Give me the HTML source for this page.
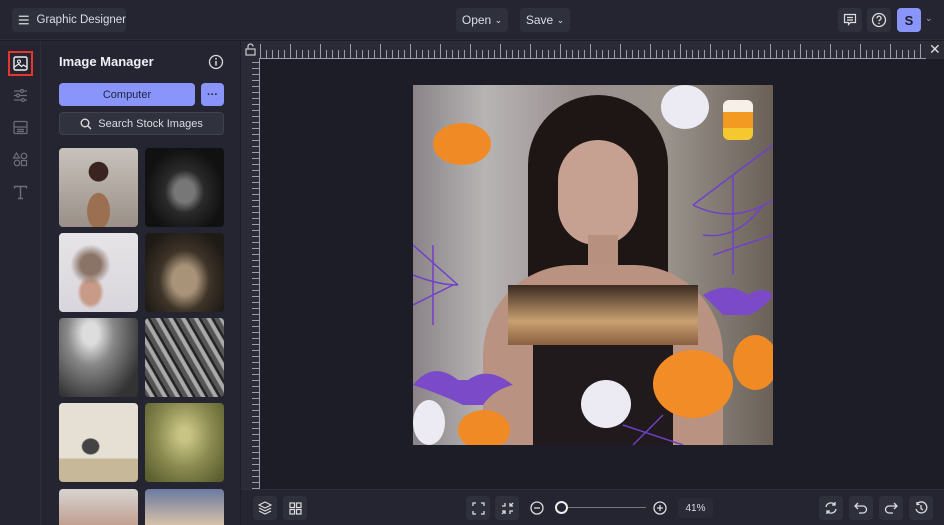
<!DOCTYPE html>
<html><head><meta charset="utf-8"><style>
*{box-sizing:border-box;margin:0;padding:0}
html,body{width:944px;height:525px;overflow:hidden}
body{background:#1c1d26;font-family:"Liberation Sans",sans-serif;color:#e6e7ee}
#root{position:relative;width:944px;height:525px;overflow:hidden}
.abs{position:absolute}
.top{left:0;top:0;width:944px;height:40px;background:#242530;border-bottom:1px solid #2c2d39}
.btn{position:absolute;background:#2e303c;border-radius:4px;font-size:12px;color:#dcdde5;display:flex;align-items:center;justify-content:center;white-space:nowrap}
.rail{left:0;top:41px;width:41px;height:484px;background:#242530;border-right:1px solid #2e2f3b}
.panel{left:41px;top:41px;width:199px;height:484px;background:#242530}
.th{position:absolute;width:79px;height:79px;border-radius:4px}
.ruler{background:#2a2b37}
</style></head><body><div id="root">
<div class="abs top"></div>
<div class="btn" style="left:12px;top:8px;width:114px;height:24px;justify-content:flex-start;padding-left:6px;font-size:11.5px">
<svg width="14" height="12" viewBox="0 0 14 12"><path d="M1 1.5h12M1 6h12M1 10.5h12" stroke="#ddd" stroke-width="1.5"/></svg><span style="margin-left:7px">Graphic Designer</span></div>
<div class="btn" style="left:456px;top:8px;width:52px;height:24px">Open&nbsp;<span style="font-size:9px">⌄</span></div>
<div class="btn" style="left:520px;top:8px;width:50px;height:24px">Save&nbsp;<span style="font-size:9px">⌄</span></div>
<div class="btn" style="left:838px;top:8px;width:24px;height:24px"><svg width="14" height="14" viewBox="0 0 14 14"><path d="M1.5 1.5h11v8h-5l-2 2v-2h-4z M4 4.5h6M4 7h6" stroke="#ddd" fill="none" stroke-width="1.2"/></svg></div>
<div class="btn" style="left:867px;top:8px;width:24px;height:24px"><svg width="16" height="16" viewBox="0 0 16 16"><circle cx="8" cy="8" r="6.5" stroke="#ddd" fill="none" stroke-width="1.3"/><path d="M6 6.3a2 2 0 1 1 2.5 1.8c-.5.2-.5.6-.5 1.2" stroke="#ddd" fill="none" stroke-width="1.3"/><circle cx="8" cy="11.3" r=".8" fill="#ddd"/></svg></div>
<div class="btn" style="left:897px;top:8px;width:24px;height:24px;background:#8a95fb;color:#1c1d2a;font-weight:bold;font-size:13px">S</div>
<div class="abs" style="left:925px;top:13px;font-size:9px;color:#aaa">⌄</div>

<div class="abs rail"></div>
<div class="abs" style="left:8px;top:51px;width:25px;height:25px;border:2px solid #e8362c"></div>
<svg class="abs" style="left:13px;top:56px" width="15" height="15" viewBox="0 0 15 15"><rect x="1" y="1" width="13" height="13" rx="1.5" fill="none" stroke="#eee" stroke-width="1.4"/><circle cx="6" cy="5.5" r="1.5" fill="none" stroke="#eee"/><path d="M1.5 11l4-3 3 2.5 2-1.5 3 2" fill="none" stroke="#eee" stroke-width="1.2"/></svg>
<svg class="abs" style="left:13px;top:88px" width="15" height="15" viewBox="0 0 15 15" stroke="#6c6e7c" fill="none" stroke-width="1.2"><path d="M1 3h13M1 7.5h13M1 12h13"/><circle cx="9" cy="3" r="1.5" fill="#242530"/><circle cx="5" cy="7.5" r="1.5" fill="#242530"/><circle cx="10" cy="12" r="1.5" fill="#242530"/></svg>
<svg class="abs" style="left:13px;top:120px" width="15" height="15" viewBox="0 0 15 15" stroke="#6c6e7c" fill="none" stroke-width="1.2"><rect x="1" y="1.5" width="13" height="12" rx="1"/><path d="M1 7h13M4 9.5h7M4 11.5h7"/></svg>
<svg class="abs" style="left:13px;top:152px" width="15" height="15" viewBox="0 0 15 15" stroke="#6c6e7c" fill="none" stroke-width="1.2"><path d="M3.5 1l3 5h-6z"/><circle cx="11" cy="4" r="2.8"/><circle cx="4" cy="11" r="2.8"/><rect x="8.5" y="8.5" width="5" height="5"/></svg>
<svg class="abs" style="left:13px;top:185px" width="15" height="15" viewBox="0 0 15 15" stroke="#6c6e7c" fill="none" stroke-width="1.4"><path d="M1.5 3.5V1.5h12v2M7.5 1.5v12M5 13.5h5"/></svg>

<div class="abs panel"></div>
<div class="abs" style="left:59px;top:54px;font-size:13px;font-weight:bold;color:#f0f0f5">Image Manager</div>
<svg class="abs" style="left:208px;top:54px" width="16" height="16" viewBox="0 0 16 16"><circle cx="8" cy="8" r="6.5" stroke="#ddd" fill="none" stroke-width="1.3"/><path d="M8 7v4.5" stroke="#ddd" stroke-width="1.5"/><circle cx="8" cy="4.8" r=".9" fill="#ddd"/></svg>
<div class="btn" style="left:59px;top:83px;width:136px;height:23px;background:#8a95fb;color:#1f2240;font-size:11px">Computer</div>
<div class="btn" style="left:201px;top:83px;width:23px;height:23px;background:#8a95fb;color:#1f2240;font-weight:bold;font-size:11px">···</div>
<div class="btn" style="left:59px;top:112px;width:165px;height:23px;background:#30323e;border:1px solid #40424f;font-size:11px"><svg width="12" height="12" viewBox="0 0 12 12"><circle cx="5" cy="5" r="3.8" stroke="#ddd" fill="none" stroke-width="1.4"/><path d="M8 8l3 3" stroke="#ddd" stroke-width="1.4"/></svg>&nbsp;&nbsp;Search Stock Images</div>
<div class="th" style="left:59px;top:148px;background:radial-gradient(circle at 50% 30%,#3a2420 0 14%,transparent 15%),radial-gradient(ellipse at 50% 80%,#9a7050 0 20%,transparent 21%),linear-gradient(#c8c2bc,#9a9088)"></div>
<div class="th" style="left:145px;top:148px;background:radial-gradient(ellipse at 50% 55%,#777 0 18%,#2a2a2a 35%,#111 70%)"></div>
<div class="th" style="left:59px;top:233px;background:radial-gradient(ellipse at 40% 40%,#8a7468 0 15%,transparent 30%),radial-gradient(ellipse at 40% 75%,#c89a88 0 14%,transparent 20%),linear-gradient(#e6e4e6,#d8d6dc)"></div>
<div class="th" style="left:145px;top:233px;background:radial-gradient(ellipse at 50% 60%,#a89278 0 22%,#3e3428 45%,#1e1a16 80%)"></div>
<div class="th" style="left:59px;top:318px;background:radial-gradient(ellipse at 40% 20%,#ddd 0 12%,#888 35%,#333 80%)"></div>
<div class="th" style="left:145px;top:318px;background:repeating-linear-gradient(60deg,#555 0 4px,#aaa 5px 8px,#222 9px 11px)"></div>
<div class="th" style="left:59px;top:403px;background:radial-gradient(ellipse at 40% 55%,#444 0 12%,transparent 14%),linear-gradient(#e6e0d4 0 70%,#c8b89a 70%)"></div>
<div class="th" style="left:145px;top:403px;background:radial-gradient(ellipse at 50% 40%,#c8c484 0 10%,#8a8a50 50%,#5c6030 90%)"></div>
<div class="th" style="left:59px;top:489px;height:36px;border-radius:4px 4px 0 0;background:linear-gradient(#d8d4d2,#c0a090)"></div>
<div class="th" style="left:145px;top:489px;height:36px;border-radius:4px 4px 0 0;background:linear-gradient(#6a7aa0,#d8c0a8)"></div>

<div class="abs ruler" style="left:241px;top:41px;width:703px;height:18px"></div>
<div class="abs ruler" style="left:241px;top:41px;width:19px;height:448px"></div>
<div class="abs" style="left:260px;top:44px;width:666px;height:14px;background:repeating-linear-gradient(90deg,#9a9cab 0 1px,transparent 1px 6px);-webkit-mask:linear-gradient(transparent 0 6px,#000 6px)"></div>
<div class="abs" style="left:260px;top:44px;width:666px;height:14px;background:repeating-linear-gradient(90deg,#9a9cab 0 1px,transparent 1px 30px)"></div>
<div class="abs" style="left:260px;top:58px;width:666px;height:1px;background:#9a9cab"></div>
<div class="abs" style="left:248px;top:62px;width:12px;height:427px;background:repeating-linear-gradient(180deg,#9a9cab 0 1px,transparent 1px 6px);-webkit-mask:linear-gradient(90deg,transparent 0 4px,#000 4px)"></div>
<div class="abs" style="left:259px;top:58px;width:1px;height:431px;background:#9a9cab"></div>
<svg class="abs" style="left:245px;top:43px" width="11" height="13" viewBox="0 0 11 13"><rect x="1" y="6" width="9" height="6" fill="none" stroke="#ccc" stroke-width="1.2"/><path d="M3 6V3.5a2.5 2.5 0 0 1 5 0" fill="none" stroke="#ccc" stroke-width="1.2"/></svg>
<div class="abs" style="left:929px;top:41px;font-size:14px;color:#ddd">✕</div>

<div class="abs" style="left:413px;top:85px;width:360px;height:360px;overflow:hidden;background:linear-gradient(90deg,#8a8488 0%,#b8b4b4 20%,#9a9090 45%,#9a948c 70%,#6a6058 100%)">
<div class="abs" style="left:115px;top:10px;width:140px;height:200px;border-radius:70px 70px 20px 20px;background:#1e1614"></div>
<div class="abs" style="left:145px;top:55px;width:80px;height:105px;border-radius:40px 40px 38px 38px;background:#c6a090"></div>
<div class="abs" style="left:175px;top:150px;width:30px;height:60px;background:#b89080"></div>
<div class="abs" style="left:70px;top:180px;width:240px;height:200px;border-radius:90px 90px 0 0;background:#ba9282"></div>
<div class="abs" style="left:120px;top:200px;width:140px;height:160px;background:#201a1c"></div>
<div class="abs" style="left:95px;top:200px;width:190px;height:60px;background:linear-gradient(#3a2a20,#c8a070 60%,#8a6040)"></div>
<div class="abs" style="left:20px;top:38px;width:58px;height:42px;border-radius:50%;background:#f08a24"></div>
<div class="abs" style="left:320px;top:250px;width:45px;height:55px;border-radius:50%;background:#f08a24"></div>
<div class="abs" style="left:240px;top:265px;width:80px;height:68px;border-radius:50%;background:#f28c26"></div>
<div class="abs" style="left:45px;top:325px;width:52px;height:40px;border-radius:50%;background:#f08a24"></div>
<div class="abs" style="left:248px;top:0px;width:48px;height:44px;border-radius:50%;background:#eceaf2"></div>
<div class="abs" style="left:168px;top:295px;width:50px;height:48px;border-radius:50%;background:#eceaf2"></div>
<div class="abs" style="left:0px;top:315px;width:32px;height:45px;border-radius:50%;background:#eceaf2"></div>
<div class="abs" style="left:310px;top:15px;width:30px;height:40px;background:linear-gradient(#f6f0e8 30%,#f29a22 30% 70%,#f6c830 70%);border-radius:6px"></div>
<svg class="abs" style="left:0;top:0" width="360" height="360" viewBox="0 0 360 360" fill="none" stroke="#7040c8" stroke-width="1.5"><path d="M280 120l80-60M300 170l60-20M320 90v100M280 120q40 20 80 -5M290 150q35 5 60-30"/><path d="M0 160l45 40M0 220l40-20M20 160v80M0 190q25 10 45 10"/><path d="M210 340l60 20M220 360l30-30"/><path d="M0 300q20-25 45-5 l10 0 q20-15 45 5q-20 5-30 20h-20q-20-10-50-20z M290 210q25-15 45 0q15-10 25 0q-10 15-25 20h-25z" fill="#7a4ac8" stroke="none"/></svg>
</div>

<div class="abs" style="left:241px;top:489px;width:703px;height:36px;background:#242530;border-top:1px solid #2e2f3b"></div>
<div class="btn" style="left:253px;top:496px;width:24px;height:24px"><svg width="14" height="14" viewBox="0 0 14 14" stroke="#ddd" fill="none" stroke-width="1.2"><path d="M7 1l6 3-6 3-6-3z M1 7l6 3 6-3M1 10l6 3 6-3"/></svg></div>
<div class="btn" style="left:283px;top:496px;width:24px;height:24px"><svg width="13" height="13" viewBox="0 0 13 13" stroke="#ddd" fill="none" stroke-width="1.2"><rect x="1" y="1" width="4.5" height="4.5"/><rect x="7.5" y="1" width="4.5" height="4.5"/><rect x="1" y="7.5" width="4.5" height="4.5"/><rect x="7.5" y="7.5" width="4.5" height="4.5"/></svg></div>
<div class="btn" style="left:466px;top:496px;width:24px;height:24px"><svg width="13" height="13" viewBox="0 0 13 13" stroke="#ddd" fill="none" stroke-width="1.3"><path d="M1 4V1h3M9 1h3v3M12 9v3H9M4 12H1V9"/></svg></div>
<div class="btn" style="left:495px;top:496px;width:24px;height:24px"><svg width="13" height="13" viewBox="0 0 13 13" stroke="#ddd" fill="none" stroke-width="1.3"><path d="M1 4h3V1M9 1v3h3M12 9H9v3M4 12V9H1M9 4l3-3M4 9l-3 3"/></svg></div>
<svg class="abs" style="left:529px;top:500px" width="16" height="16" viewBox="0 0 16 16"><circle cx="8" cy="8" r="6" stroke="#ddd" fill="none" stroke-width="1.3"/><path d="M5 8h6" stroke="#ddd" stroke-width="1.3"/></svg>
<div class="abs" style="left:560px;top:507px;width:86px;height:1px;background:#777"></div>
<div class="abs" style="left:555px;top:501px;width:13px;height:13px;border-radius:50%;border:2px solid #eee;background:#242530"></div>
<svg class="abs" style="left:652px;top:500px" width="16" height="16" viewBox="0 0 16 16"><circle cx="8" cy="8" r="6" stroke="#ddd" fill="none" stroke-width="1.3"/><path d="M5 8h6M8 5v6" stroke="#ddd" stroke-width="1.3"/></svg>
<div class="btn" style="left:678px;top:498px;width:35px;height:20px;font-size:10px;background:#2a2b37">41%</div>
<div class="btn" style="left:819px;top:496px;width:24px;height:24px"><svg width="14" height="14" viewBox="0 0 14 14" stroke="#ddd" fill="none" stroke-width="1.3"><path d="M2 6a5 5 0 0 1 9-2M12 8a5 5 0 0 1-9 2M11 1v3H8M3 13v-3h3"/></svg></div>
<div class="btn" style="left:849px;top:496px;width:24px;height:24px"><svg width="14" height="14" viewBox="0 0 14 14" stroke="#ddd" fill="none" stroke-width="1.3"><path d="M4 2L1 5l3 3M1 5h8a3.5 3.5 0 0 1 0 7H5"/></svg></div>
<div class="btn" style="left:879px;top:496px;width:24px;height:24px"><svg width="14" height="14" viewBox="0 0 14 14" stroke="#ddd" fill="none" stroke-width="1.3"><path d="M10 2l3 3-3 3M13 5H5a3.5 3.5 0 0 0 0 7h4"/></svg></div>
<div class="btn" style="left:909px;top:496px;width:24px;height:24px"><svg width="14" height="14" viewBox="0 0 14 14" stroke="#ddd" fill="none" stroke-width="1.3"><path d="M3 3a5.5 5.5 0 1 1-1 5M3 1v2.5h2.5M7 4v3.5l2 1.5"/></svg></div>
</div></body></html>
